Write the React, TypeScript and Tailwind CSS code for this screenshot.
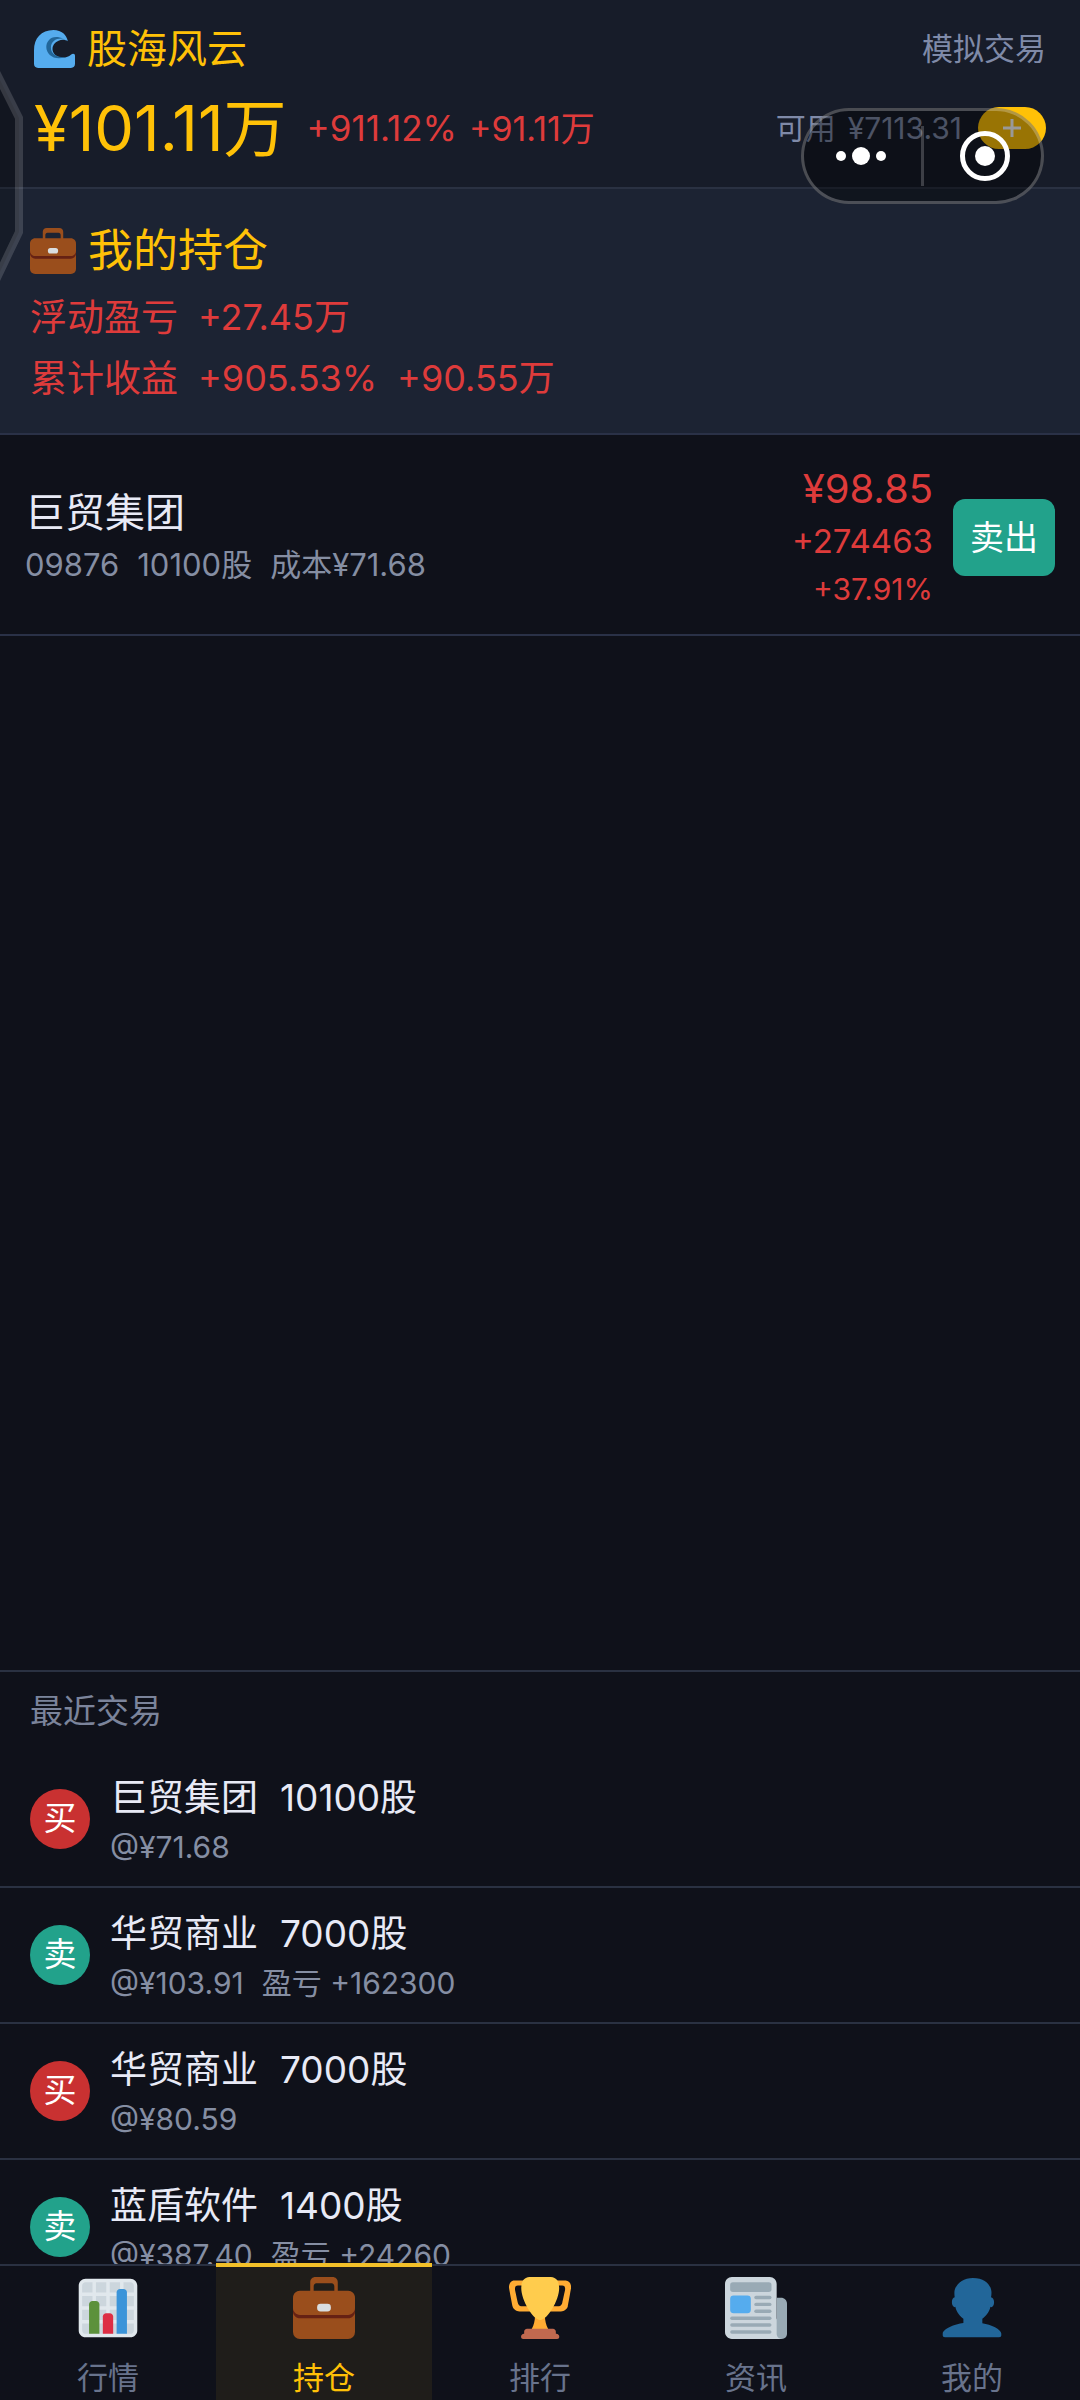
import React from "react";

type IconProps = { className?: string };

function WaveIcon({ className }: IconProps) {
  return (
    <svg viewBox="0 0 40 37" className={className} aria-hidden="true">
      <path
        fill="#55ACEE"
        d="M0 33V20C0 8 7 0 19 0c8 0 13 5 14 11-2-1.500-6-2-9-.5-8 3-8 13.500 1 16 5 1 8.500-.5 11-2.500 2-1.500 4-1 4 1v8q0 4-4 4H4q-4 0-4-4z"
      />
      <path
        fill="#226699"
        d="M29 8.500C18 3.500 12 10 12 16.500 12 24 20 30 30 26.500 20 26.500 16.500 22 16.500 17 16.500 11 22 7.500 29 8.500z"
      />
    </svg>
  );
}

function BriefcaseIcon({ className }: IconProps) {
  return (
    <svg viewBox="0 0 36 36" className={className} aria-hidden="true">
      <path
        fill="#9A4E1C"
        d="M13 0h10c1.700 0 3 1.300 3 3v6h-2V5.500c0-1-.6-1.800-1.600-1.800h-8.800c-1 0-1.600.8-1.600 1.800V9h-2V3c0-1.700 1.300-3 3-3z"
      />
      <rect x="0" y="16" width="36" height="20" rx="4" fill="#9A4E1C" />
      <path fill="#662113" d="M0 18h36v2c0 2.200-1.800 4-4 4H4c-2.200 0-4-1.800-4-4z" />
      <path
        fill="#9A4E1C"
        d="M4 8h28c2.200 0 4 1.800 4 4v6c0 2.200-1.800 4-4 4H4c-2.200 0-4-1.800-4-4v-6c0-2.200 1.800-4 4-4z"
      />
      <rect x="14" y="15.600" width="8" height="4.400" rx="2" fill="#D9DDE0" />
    </svg>
  );
}

function ChartIcon({ className }: IconProps) {
  return (
    <svg viewBox="0 0 36 36" className={className} aria-hidden="true">
      <path fill="#CCD6DD" d="M31 2H5C3.343 2 2 3.343 2 5v26c0 1.657 1.343 3 3 3h26c1.657 0 3-1.343 3-3V5c0-1.657-1.343-3-3-3z" />
      <path
        fill="#E1E8ED"
        d="M31 1H5C2.791 1 1 2.791 1 5v26c0 2.209 1.791 4 4 4h26c2.209 0 4-1.791 4-4V5c0-2.209-1.791-4-4-4zm0 2c1.103 0 2 .897 2 2v4h-6V3h4zm-4 16h6v6h-6v-6zm0-2v-6h6v6h-6zM25 3v6h-6V3h6zm-6 8h6v6h-6v-6zm0 8h6v6h-6v-6zM17 3v6h-6V3h6zm-6 8h6v6h-6v-6zm0 8h6v6h-6v-6zM3 5c0-1.103.897-2 2-2h4v6H3V5zm0 6h6v6H3v-6zm0 8h6v6H3v-6zm2 14c-1.103 0-2-.897-2-2v-4h6v6H5zm6 0v-6h6v6h-6zm8 0v-6h6v6h-6zm12 0h-4v-6h6v4c0 1.103-.897 2-2 2z"
      />
      <path fill="#5C913B" d="M13 33H7V16c0-1.104.896-2 2-2h2c1.104 0 2 .896 2 2v17z" />
      <path fill="#3B94D9" d="M29 33h-6V9c0-1.104.896-2 2-2h2c1.104 0 2 .896 2 2v24z" />
      <path fill="#DD2E44" d="M21 33h-6V23c0-1.104.896-2 2-2h2c1.104 0 2 .896 2 2v10z" />
    </svg>
  );
}

function TrophyIcon({ className }: IconProps) {
  return (
    <svg viewBox="0 0 36 36" className={className} aria-hidden="true">
      <path
        fill="#FFAC33"
        d="M5.123 5h6C12.227 5 13 4.896 13 6V4c0-1.104-.773-2-1.877-2h-8c-2 0-3.583 2.125-3 5 0 0 1.791 9.375 1.917 9.958C2.373 18.500 4.164 20 6.081 20h6.958c1.105 0-.039-1.896-.039-3v-2c0 1.104-.773 2-1.877 2h-4c-1.104 0-1.833-1.042-2-2S3.539 7.667 3.539 7.667C3.206 5.750 4.018 5 5.123 5zm25.812 0h-6C23.831 5 22 4.896 22 6V4c0-1.104 1.831-2 2.935-2h8c2 0 3.584 2.125 3 5 0 0-1.633 9.419-1.771 10-.354 1.500-2.042 3-4 3h-7.146C21.914 20 22 18.104 22 17v-2c0 1.104 1.831 2 2.935 2h4c1.104 0 1.834-1.042 2-2s1.584-7.333 1.584-7.333C32.851 5.750 32.040 5 30.935 5zM20.832 22c0-6.958-2.709 0-2.709 0s-3-6.958-3 0-3.291 10-3.291 10h12.292c-.001 0-3.292-3.042-3.292-10z"
      />
      <path
        fill="#FFCC4D"
        d="M29.123 6.577c0 6.775-6.770 18.423-11 18.423-4.231 0-11-11.649-11-18.423C7.123.802 9.863 0 13.123 0h10c3.260 0 6 .802 6 6.577z"
      />
      <path
        fill="#C1694F"
        d="M10.500 30h15c1 0 1.700.8 1.700 1.700v1.300h.3c1 0 1.700.8 1.700 1.700 0 .8-.6 1.300-1.200 1.300H8.200c-.6 0-1.200-.5-1.200-1.300C7 33.800 7.700 33 8.700 33h.1v-1.300c0-.9.7-1.700 1.700-1.700z"
      />
    </svg>
  );
}

function NewspaperIcon({ className }: IconProps) {
  return (
    <svg viewBox="0 0 36 36" className={className} aria-hidden="true">
      <path fill="#CCD6DD" d="M4 0h22c2.200 0 4 1.800 4 4v20l3 12H4c-2.200 0-4-1.800-4-4V4c0-2.200 1.800-4 4-4z" />
      <path fill="#99AAB5" d="M30 12h2.500c2 0 3.500 1.500 3.500 3.500V33c0 1.700-1.300 3-3 3s-3-1.300-3-3z" />
      <rect x="3" y="3" width="24" height="5.700" rx="1.600" fill="#99AAB5" />
      <rect x="3" y="10.700" width="12" height="10.300" rx="2" fill="#55ACEE" />
      <g fill="#99AAB5">
        <rect x="17" y="10.900" width="10" height="2" rx="1" />
        <rect x="17" y="14.900" width="10" height="2" rx="1" />
        <rect x="17" y="18.900" width="10" height="2" rx="1" />
        <rect x="3" y="22.900" width="24" height="2" rx="1" />
        <rect x="3" y="26.900" width="24" height="2" rx="1" />
        <rect x="3" y="30.900" width="24" height="2" rx="1" />
      </g>
    </svg>
  );
}

function PersonIcon({ className }: IconProps) {
  return (
    <svg viewBox="0 0 36 36" className={className} aria-hidden="true">
      <path
        fill="#226699"
        d="M24 26.799v-2.566c2-1.348 4.080-3.779 4.703-6.896.186.103.206.170.413.170.991 0 1.709-1.287 1.709-2.873 0-1.562-.823-2.827-1.794-2.865.187-.674.293-1.577.293-2.735C29.324 5.168 26 .527 18.541.527c-6.629 0-10.777 4.641-10.777 8.507 0 1.123.069 2.043.188 2.755-.911.137-1.629 1.352-1.629 2.845 0 1.587.804 2.873 1.796 2.873.206 0 .025-.067.209-.170C8.952 20.453 11 22.885 13 24.232v2.414c-5 .645-12 3.437-12 6.230v1.061C1 35 2.076 35 3.137 35h29.725C33.924 35 35 35 35 33.938v-1.061c0-2.615-6-5.225-11-6.078z"
      />
    </svg>
  );
}

const trades = [
  { side: "买", name: "巨贸集团", shares: "10100股", price: "@¥71.68", pnl: "" },
  { side: "卖", name: "华贸商业", shares: "7000股", price: "@¥103.91", pnl: "盈亏 +162300" },
  { side: "买", name: "华贸商业", shares: "7000股", price: "@¥80.59", pnl: "" },
  { side: "卖", name: "蓝盾软件", shares: "1400股", price: "@¥387.40", pnl: "盈亏 +24260" },
];

const tabs = [
  { label: "行情", Icon: ChartIcon },
  { label: "持仓", Icon: BriefcaseIcon, active: true },
  { label: "排行", Icon: TrophyIcon },
  { label: "资讯", Icon: NewspaperIcon },
  { label: "我的", Icon: PersonIcon },
];

function Header() {
  return (
    <header className="border-b-2 border-[#2a3142] bg-[#171c29] px-[34px] pt-[25px] pb-[23px]">
      <div className="flex h-12 items-center justify-between">
        <h1 className="flex items-center gap-3 text-[40px] text-[#ffc107]">
          <WaveIcon className="h-[38px] w-[41px]" />
          股海风云
        </h1>
        <span className="text-[31px] text-[#7f8aa8]">模拟交易</span>
      </div>
      <div className="mt-[19px] flex h-18 items-center justify-between">
        <div className="flex items-center text-[#de3b3b]">
          <span className="mr-5 text-[63px] text-[#ffc107]">¥101.11万</span>
          <span className="mr-3 text-[35px]">+911.12%</span>
          <span className="text-[34px]">+91.11万</span>
        </div>
        <div className="flex items-center gap-4 text-[#7f8aa8]">
          <span className="flex items-center gap-3 text-[30px]">
            <span>可用</span>
            <span>¥7113.31</span>
          </span>
          <button
            type="button"
            aria-label="增加资金"
            className="flex h-[42px] w-[68px] items-center justify-center rounded-full bg-[#ffc107]"
          >
            <svg viewBox="0 0 18 18" className="h-[18px] w-[18px]" aria-hidden="true">
              <path d="M9 0v18M0 9h18" stroke="#ffffff" strokeWidth="3" />
            </svg>
          </button>
        </div>
      </div>
    </header>
  );
}

function Capsule() {
  return (
    <div className="absolute top-[108px] right-9 flex h-24 w-[243px] items-center rounded-full border-3 border-white/25 bg-black/40">
      <button type="button" aria-label="更多" className="flex flex-1 items-center justify-center gap-[6px] pr-1">
        <span className="h-[10px] w-[10px] rounded-full bg-white" />
        <span className="h-[18px] w-[18px] rounded-full bg-white" />
        <span className="h-[10px] w-[10px] rounded-full bg-white" />
      </button>
      <span className="h-[60px] w-[3px] bg-white/20" />
      <button type="button" aria-label="关闭" className="flex flex-1 items-center justify-center pl-1">
        <span className="flex h-[50px] w-[50px] items-center justify-center rounded-full border-5 border-white">
          <span className="h-5 w-5 rounded-full bg-white" />
        </span>
      </button>
    </div>
  );
}

function EdgeHandle() {
  return (
    <svg viewBox="0 0 24 214" className="absolute top-[70px] left-0 h-[214px] w-6" aria-hidden="true">
      <path d="M-4 2 19 48v114L-4 210z" fill="#000000" fillOpacity="0.2" />
      <path d="M-4 2 19 48v114L-4 210" fill="none" stroke="#ffffff" strokeOpacity="0.15" strokeWidth="8" />
    </svg>
  );
}

function Summary() {
  return (
    <section className="border-b-2 border-[#2a3147] bg-[#1c2333] px-[30px] pt-8 pb-6 text-[#de3b3b]">
      <h2 className="flex h-15 items-center gap-3 text-[45px] text-[#ffc107]">
        <BriefcaseIcon className="h-[46px] w-[46px]" />
        我的持仓
      </h2>
      <dl className="mt-[6px] text-[36px] leading-[61px]">
        <div className="flex gap-5">
          <dt className="text-[37px]">浮动盈亏</dt>
          <dd>+27.45万</dd>
        </div>
        <div className="flex gap-5">
          <dt className="text-[37px]">累计收益</dt>
          <dd>+905.53%</dd>
          <dd>+90.55万</dd>
        </div>
      </dl>
    </section>
  );
}

function Holding() {
  return (
    <article className="flex items-center border-b-2 border-[#2a3147] px-[25px] pt-[26px] pb-[21px]">
      <div className="flex-1 pt-1">
        <h3 className="text-[40px] leading-[52px] text-[#e8eaf6]">巨贸集团</h3>
        <p className="flex gap-[18px] text-[31px] leading-[52px] text-[#858ea3]">
          <span>09876</span>
          <span>10100股</span>
          <span>成本¥71.68</span>
        </p>
      </div>
      <div className="mr-5 flex flex-col text-right text-[#de3b3b]">
        <span className="text-[40px] leading-[56px]">¥98.85</span>
        <span className="text-[33px] leading-[48px]">+274463</span>
        <span className="text-[30px] leading-[48px]">+37.91%</span>
      </div>
      <button type="button" className="h-[77px] w-[102px] rounded-xl bg-[#22a28b] text-[34px] text-white">
        卖出
      </button>
    </article>
  );
}

function RecentTrades() {
  return (
    <section className="max-h-[594px] shrink-0 overflow-hidden border-t-2 border-[#2a3142]">
      <h2 className="px-[30px] pt-[15px] pb-[17px] text-[33px] leading-[48px] text-[#7b849b]">最近交易</h2>
      <ul>
        {trades.map((t, i) => (
          <li key={i} className="flex h-[136px] items-center gap-5 border-b-2 border-[#2a3142] px-[30px]">
            <span
              className={
                t.side === "买"
                  ? "flex h-[60px] w-[60px] items-center justify-center rounded-full bg-[#c93131] text-[33px] text-white"
                  : "flex h-[60px] w-[60px] items-center justify-center rounded-full bg-[#22a28b] text-[33px] text-white"
              }
            >
              {t.side}
            </span>
            <div className="pt-[6px]">
              <p className="flex gap-[22px] text-[37px] leading-[50px] text-[#e8eaf6]">
                <span>{t.name}</span>
                <span>{t.shares}</span>
              </p>
              <p className="flex gap-[18px] text-[30px] leading-[48px] text-[#858ea3]">
                <span>{t.price}</span>
                {t.pnl && <span>{t.pnl}</span>}
              </p>
            </div>
          </li>
        ))}
      </ul>
    </section>
  );
}

function TabBar() {
  return (
    <nav className="grid shrink-0 grid-cols-5 border-t-2 border-[#2a3142]">
      {tabs.map(({ label, Icon, active }) => (
        <button
          key={label}
          type="button"
          aria-current={active ? "page" : undefined}
          className={
            active
              ? "relative flex flex-col items-center bg-[#1f1d1a] pt-[11px] pb-1 text-[#ffc107] before:absolute before:inset-x-0 before:-top-[3px] before:h-1 before:bg-[#f2c029]"
              : "relative flex flex-col items-center pt-[11px] pb-1 text-[#68738c]"
          }
        >
          <Icon className="h-[62px] w-[62px]" />
          <span className="mt-[21px] text-[31px] leading-9">{label}</span>
        </button>
      ))}
    </nav>
  );
}

export default function App() {
  return (
    <div className="relative flex h-screen flex-col bg-[#0f111a] font-['Inter','Noto_Sans_CJK_SC',sans-serif]">
      <Header />
      <main className="flex min-h-0 flex-1 flex-col">
        <Summary />
        <div className="min-h-0 flex-1">
          <Holding />
        </div>
        <RecentTrades />
      </main>
      <TabBar />
      <EdgeHandle />
      <Capsule />
    </div>
  );
}
